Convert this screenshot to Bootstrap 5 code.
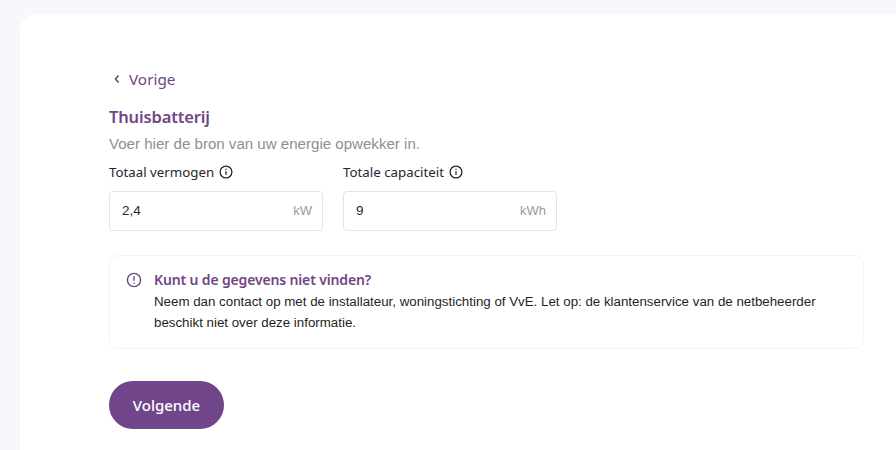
<!DOCTYPE html>
<html lang="nl">
<head>
<meta charset="utf-8">
<title>Thuisbatterij</title>
<link href="https://cdn.jsdelivr.net/npm/bootstrap@5.3.0/dist/css/bootstrap.min.css" rel="stylesheet">
<style>
html,body{height:450px;overflow:hidden}
body{background:#f7f8fb;font-family:"Liberation Sans",Arial,sans-serif;color:#1f1f24}
.shell{margin:14px 0 0 20px;background:#fff;border-radius:16px 0 0 0;height:436px;padding:55px 32px 0 89px}
.headfont{font-family:"Noto Sans",sans-serif}
.back{color:#6b4a80;font-size:15.3px;line-height:20px;height:20px;text-decoration:none;padding-left:4px;gap:8px}
.ttl{color:#6f4684;font-size:16.5px;font-weight:600;letter-spacing:-.15px;line-height:24px;margin:16px 0 0}
.sub{color:#8e8e96;font-size:15.08px;line-height:20px;margin:5px 0 0}
.fields{gap:20px;margin-top:8px}
.fieldbox{width:214px}
.lbl{font-size:13.3px;line-height:20px;color:#26262b;gap:5px;margin-bottom:9px}
.inwrap{height:40px;border:1px solid #e3e4ea;border-radius:4px;padding:0 10px 0 12px;font-size:13.5px;background:#fff}
.inwrap input{border:0;outline:0;width:100%;padding:0;color:#2a2a2f;background:transparent;font:inherit}
.unit{color:#9a9aa2;font-size:13px}
.info{margin-top:24px;width:755px;height:94px;border:1px solid #f4f4f6;border-radius:10px;padding:14px 17px 14px 16px;gap:12px}
.infoicon{margin-top:2px}
.infot{color:#6f4684;font-size:14px;font-weight:600;letter-spacing:-.15px;line-height:20px}
.infob{font-size:13.32px;line-height:21px;color:#1f1f24;margin:1px 0 0}
.next{margin-top:32px;width:115px;height:48px;border-radius:24px;background:#71458a;border:0;color:#fff;font-size:15px;font-weight:500;padding:0}
.next:hover{background:#71458a;color:#fff}
</style>
</head>
<body>
<main class="shell">
<a href="#" class="back headfont d-flex align-items-center">
<svg width="8" height="10" viewBox="0 0 8 10" fill="none" stroke="#5f4570" stroke-width="1.5"><path d="M5.5 1.5 2.5 5l3 3.5"/></svg>
<span>Vorige</span>
</a>
<h1 class="ttl headfont">Thuisbatterij</h1>
<p class="sub">Voer hier de bron van uw energie opwekker in.</p>
<div class="fields d-flex">
<div class="fieldbox">
<div class="lbl headfont d-flex align-items-center">Totaal vermogen
<svg width="14" height="14" viewBox="0 0 14 14" fill="none" stroke="#26262b" stroke-width="1.3"><circle cx="7" cy="7" r="5.9"/><path d="M7 6.2v3.6"/><path d="M7 3.8v1.2"/></svg>
</div>
<div class="inwrap d-flex align-items-center"><input type="text" value="2,4" aria-label="Totaal vermogen"><span class="unit">kW</span></div>
</div>
<div class="fieldbox">
<div class="lbl headfont d-flex align-items-center">Totale capaciteit
<svg width="14" height="14" viewBox="0 0 14 14" fill="none" stroke="#26262b" stroke-width="1.3"><circle cx="7" cy="7" r="5.9"/><path d="M7 6.2v3.6"/><path d="M7 3.8v1.2"/></svg>
</div>
<div class="inwrap d-flex align-items-center"><input type="text" value="9" aria-label="Totale capaciteit"><span class="unit">kWh</span></div>
</div>
</div>
<div class="info d-flex">
<svg class="flex-shrink-0 infoicon" width="16" height="16" viewBox="0 0 16 16" fill="none" stroke="#6f4684" stroke-width="1.4"><circle cx="8" cy="8" r="6.6"/><path d="M8 4.3v4.4"/><path d="M8 10.4v1.3"/></svg>
<div>
<div class="infot headfont">Kunt u de gegevens niet vinden?</div>
<p class="infob">Neem dan contact op met de installateur, woningstichting of VvE. Let op: de klantenservice van de netbeheerder beschikt niet over deze informatie.</p>
</div>
</div>
<button type="button" class="btn next headfont">Volgende</button>
</main>
</body>
</html>
